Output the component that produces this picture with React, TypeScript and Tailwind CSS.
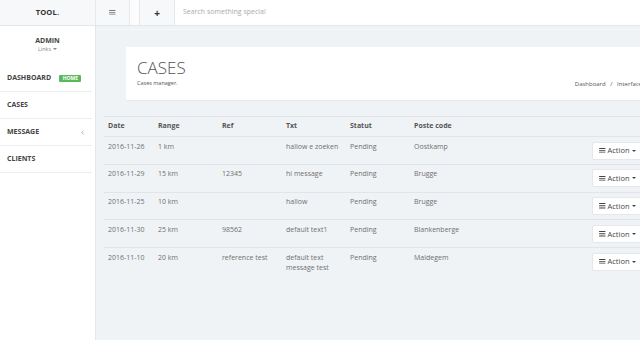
import React from "react";

const rows = [
  { date: "2016-11-26", range: "1 km", ref: "", txt: "hallow e zoeken", statut: "Pending", poste: "Oostkamp" },
  { date: "2016-11-29", range: "15 km", ref: "12345", txt: "hi message", statut: "Pending", poste: "Brugge" },
  { date: "2016-11-25", range: "10 km", ref: "", txt: "hallow", statut: "Pending", poste: "Brugge" },
  { date: "2016-11-30", range: "25 km", ref: "98562", txt: "default text1", statut: "Pending", poste: "Blankenberge" },
  { date: "2016-11-10", range: "20 km", ref: "reference test", txt: "default text message test", statut: "Pending", poste: "Maldegem" },
];

function Bars({ className }: { className?: string }) {
  return (
    <svg viewBox="0 0 8 7" className={className} fill="currentColor">
      <rect x="0" y="0" width="8" height="1.3" />
      <rect x="0" y="2.85" width="8" height="1.3" />
      <rect x="0" y="5.7" width="8" height="1.3" />
    </svg>
  );
}

function Caret() {
  return <span className="inline-block w-0 h-0 border-l-[2.5px] border-r-[2.5px] border-t-[2.5px] border-l-transparent border-r-transparent border-t-current align-middle" />;
}

export default function App() {
  return (
    <div className="w-[640px] h-[340px] overflow-hidden flex flex-col bg-white font-['Open_Sans',sans-serif] text-[#666]">
      {/* top bar */}
      <div className="h-[26px] flex border-b border-[#e3e6ea] shrink-0">
        <div className="w-[96px] bg-[#f7f8f9] border-r border-[#e6e9ec] flex items-center justify-center">
          <span className="text-[7.5px] font-bold text-[#333] tracking-[0.2px]">TOOL.</span>
        </div>
        <div className="w-[34px] bg-[#f7f8f9] border-r border-[#e6e9ec] flex items-center justify-center">
          <Bars className="w-[6.5px] h-[5.5px] text-[#777]" />
        </div>
        <div className="w-[10px] bg-[#fcfcfd] border-r border-[#e6e9ec]" />
        <div className="w-[35px] bg-[#f7f8f9] border-r border-[#e6e9ec] flex items-center justify-center">
          <span className="text-[10px] font-bold text-[#333] leading-none">+</span>
        </div>
        <div className="flex-1 flex items-center pl-[8px]">
          <span className="text-[7px] text-[#aaa]">Search something special</span>
        </div>
      </div>

      <div className="flex-1 flex min-h-0">
        {/* sidebar */}
        <div className="w-[96px] shrink-0 bg-white border-r border-[#e3e6ea] flex flex-col">
          <div className="h-[39px] flex flex-col items-center justify-center pb-[2px]">
            <span className="text-[7px] font-bold text-[#444] leading-[9px]">ADMIN</span>
            <span className="text-[5.5px] text-[#888] leading-[8px] flex items-center gap-[2px]">
              Links <Caret />
            </span>
          </div>
          <div className="h-[27px] flex items-center pl-[7px] border-b border-[#eceef1] mr-[3px]">
            <span className="text-[7px] font-bold text-[#444]">DASHBOARD</span>
            <span className="ml-[8px] bg-[#5cb85c] text-white text-[5px] font-bold leading-[7px] px-[3.5px] rounded-[1px]">HOME</span>
          </div>
          <div className="h-[27px] flex items-center pl-[7px] border-b border-[#eceef1] mr-[3px]">
            <span className="text-[7px] font-bold text-[#444]">CASES</span>
          </div>
          <div className="h-[27px] flex items-center justify-between pl-[7px] pr-[8px] border-b border-[#eceef1] mr-[3px]">
            <span className="text-[7px] font-bold text-[#444]">MESSAGE</span>
            <svg viewBox="0 0 4 6" className="w-[3px] h-[5px] text-[#888]" fill="none" stroke="currentColor" strokeWidth="0.9">
              <path d="M3.3 0.5 L1 3 L3.3 5.5" />
            </svg>
          </div>
          <div className="h-[27px] flex items-center pl-[7px] border-b border-[#eceef1] mr-[3px]">
            <span className="text-[7px] font-bold text-[#444]">CLIENTS</span>
          </div>
        </div>

        {/* main */}
        <div className="flex-1 bg-[#f0f3f6] pt-[3px] min-w-0">
          <div className="border-t border-[#f7f8fa] pt-[17px] pl-[8px]">
            <div className="ml-[22px] w-[520px] h-[54px] bg-white border-b border-[#e6e9ed] flex justify-between pl-[11px] pr-[4px]">
              <div className="flex flex-col pt-[11px]">
                <span className="text-[17px] font-light text-[#555] leading-[20px]">CASES</span>
                <span className="text-[5.5px] text-[#555] leading-[9px] mt-[1px]">Cases manager.</span>
              </div>
              <div className="pt-[33px] text-[6px] text-[#555] whitespace-nowrap">
                Dashboard <span className="mx-[3px]">/</span> Interface
              </div>
            </div>

            <div className="mt-[15px] w-[560px]">
              <div className="h-[21px] grid grid-cols-[50px_64px_64px_64px_64px_178px_1fr] items-center border-t border-b border-[#e1e5ea] text-[7px] font-bold text-[#555]">
                <div className="pl-[4px]">Date</div>
                <div className="pl-[4px]">Range</div>
                <div className="pl-[4px]">Ref</div>
                <div className="pl-[4px]">Txt</div>
                <div className="pl-[4px]">Statut</div>
                <div className="pl-[4px]">Poste code</div>
                <div />
              </div>
              {rows.map((r, i) => (
                <div
                  key={i}
                  className={`grid grid-cols-[50px_64px_64px_64px_64px_178px_1fr] text-[7px] text-[#6f6f6f] leading-[10.5px] ${i < rows.length - 1 ? "h-[27.75px] border-b border-[#e1e5ea]" : "h-[30px]"}`}
                >
                  <div className="pl-[4px] pt-[4.5px]">{r.date}</div>
                  <div className="pl-[4px] pt-[4.5px]">{r.range}</div>
                  <div className="pl-[4px] pt-[4.5px]">{r.ref}</div>
                  <div className="pl-[4px] pt-[4.5px] pr-[6px]">{r.txt}</div>
                  <div className="pl-[4px] pt-[4.5px]">{r.statut}</div>
                  <div className="pl-[4px] pt-[4.5px]">{r.poste}</div>
                  <div className="pl-[4px] pt-[4.5px]">
                    <div className="w-[56px] h-[18px] bg-white border border-[#e4e7eb] rounded-[2px] flex items-center pl-[6px] gap-[2px] text-[#444] text-[7.5px]">
                      <Bars className="w-[6.5px] h-[5.5px]" />
                      <span>Action</span>
                      <Caret />
                    </div>
                  </div>
                </div>
              ))}
            </div>
          </div>
        </div>
      </div>
    </div>
  );
}
